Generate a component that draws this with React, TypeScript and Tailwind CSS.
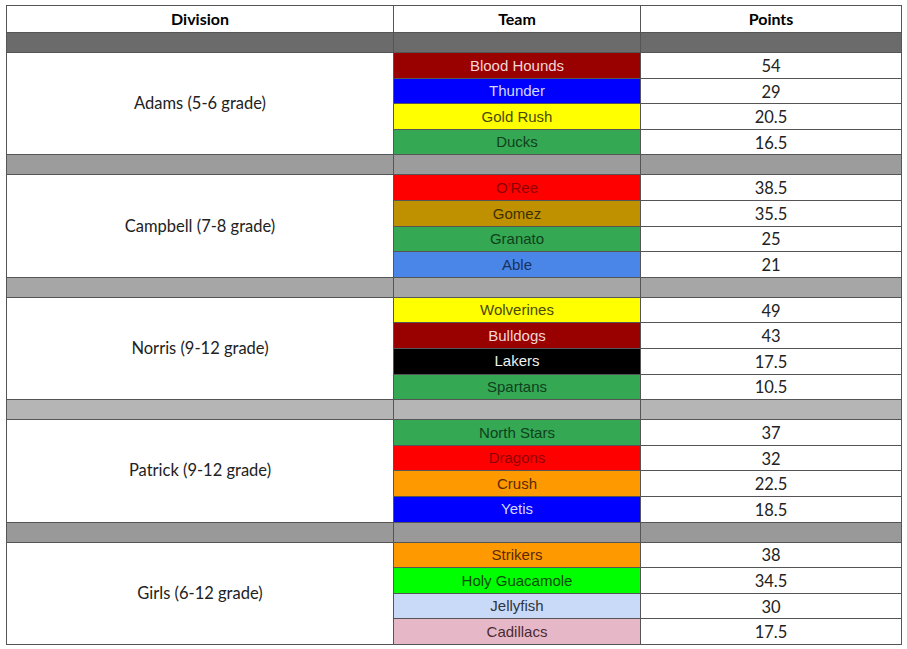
import React from 'react';

type Team = { name: string; bg: string; fg: string; points: string };
type Division = { name: string; sep: string; teams: Team[] };

const divisions: Division[] = [
  {
    name: 'Adams (5-6 grade)',
    sep: 'bg-[#6b6b6b]',
    teams: [
      { name: 'Blood Hounds', bg: 'bg-[#990000]', fg: 'text-[#f3d6d6]', points: '54' },
      { name: 'Thunder', bg: 'bg-[#0000ff]', fg: 'text-[#d6d6ff]', points: '29' },
      { name: 'Gold Rush', bg: 'bg-[#ffff00]', fg: 'text-[#4a4a00]', points: '20.5' },
      { name: 'Ducks', bg: 'bg-[#34a853]', fg: 'text-[#10401d]', points: '16.5' },
    ],
  },
  {
    name: 'Campbell (7-8 grade)',
    sep: 'bg-[#9c9c9c]',
    teams: [
      { name: "O'Ree", bg: 'bg-[#ff0000]', fg: 'text-[#8f0000]', points: '38.5' },
      { name: 'Gomez', bg: 'bg-[#bf9000]', fg: 'text-[#3f3000]', points: '35.5' },
      { name: 'Granato', bg: 'bg-[#34a853]', fg: 'text-[#10401d]', points: '25' },
      { name: 'Able', bg: 'bg-[#4a86e8]', fg: 'text-[#17325e]', points: '21' },
    ],
  },
  {
    name: 'Norris (9-12 grade)',
    sep: 'bg-[#a6a6a6]',
    teams: [
      { name: 'Wolverines', bg: 'bg-[#ffff00]', fg: 'text-[#4a4a00]', points: '49' },
      { name: 'Bulldogs', bg: 'bg-[#990000]', fg: 'text-[#f3d6d6]', points: '43' },
      { name: 'Lakers', bg: 'bg-[#000000]', fg: 'text-[#f0f0f0]', points: '17.5' },
      { name: 'Spartans', bg: 'bg-[#34a853]', fg: 'text-[#10401d]', points: '10.5' },
    ],
  },
  {
    name: 'Patrick (9-12 grade)',
    sep: 'bg-[#b5b5b5]',
    teams: [
      { name: 'North Stars', bg: 'bg-[#34a853]', fg: 'text-[#10401d]', points: '37' },
      { name: 'Dragons', bg: 'bg-[#ff0000]', fg: 'text-[#8f0000]', points: '32' },
      { name: 'Crush', bg: 'bg-[#ff9900]', fg: 'text-[#5a2a00]', points: '22.5' },
      { name: 'Yetis', bg: 'bg-[#0000ff]', fg: 'text-[#d6d6ff]', points: '18.5' },
    ],
  },
  {
    name: 'Girls (6-12 grade)',
    sep: 'bg-[#999999]',
    teams: [
      { name: 'Strikers', bg: 'bg-[#ff9900]', fg: 'text-[#5a2a00]', points: '38' },
      { name: 'Holy Guacamole', bg: 'bg-[#00ff00]', fg: 'text-[#0a4a0a]', points: '34.5' },
      { name: 'Jellyfish', bg: 'bg-[#c9daf8]', fg: 'text-[#2e3440]', points: '30' },
      { name: 'Cadillacs', bg: 'bg-[#e6b8c7]', fg: 'text-[#4a2a33]', points: '17.5' },
    ],
  },
];

const cell = 'border-r border-b border-[#555] flex items-center justify-center';

export default function App() {
  return (
    <div className="w-[907px] h-[649px] bg-white pt-[5px] pl-[6px]">
      <div className="grid grid-cols-[387px_247px_261px] w-[896px] border-l border-t border-[#555] font-['Lato','Liberation_Sans',sans-serif] text-[16.5px] text-[#222]">
        <div className={`${cell} h-[27px] font-bold text-black text-[16px]`}>Division</div>
        <div className={`${cell} h-[27px] font-bold text-black text-[16px]`}>Team</div>
        <div className={`${cell} h-[27px] font-bold text-black text-[16px]`}>Points</div>
        {divisions.map((d) => (
          <React.Fragment key={d.name}>
            <div className={`${cell} h-[20px] ${d.sep}`} />
            <div className={`${cell} h-[20px] ${d.sep}`} />
            <div className={`${cell} h-[20px] ${d.sep}`} />
            <div className={`${cell} row-span-4`}>{d.name}</div>
            {d.teams.map((t) => (
              <React.Fragment key={t.name}>
                <div
                  className={`${cell} h-[25.6px] pt-px ${t.bg} ${t.fg} font-['Liberation_Sans',Arial,sans-serif] text-[15px]`}
                  style={{ gridColumn: 2 }}
                >
                  {t.name}
                </div>
                <div className={`${cell} h-[25.6px] pt-[2px]`} style={{ gridColumn: 3 }}>
                  {t.points}
                </div>
              </React.Fragment>
            ))}
          </React.Fragment>
        ))}
      </div>
    </div>
  );
}
